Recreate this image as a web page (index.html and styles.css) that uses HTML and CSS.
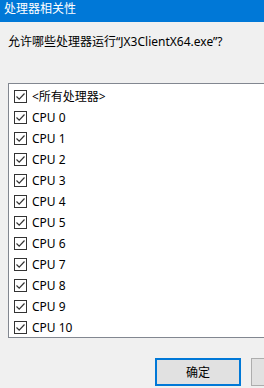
FILE: index.html
```html
<!DOCTYPE html>
<html>
<head>
<meta charset="utf-8">
<link rel="stylesheet" href="styles.css">
</head>
<body>
<div class="dialog">
  <div class="titlebar">处理器相关性</div>
  <div class="prompt">允许哪些处理器运行“JX3ClientX64.exe”?</div>
  <div class="listbox">
    <div class="row"><span class="cb"><svg width="11" height="11" viewBox="0 0 11 11"><path d="M1.5 5.5 L4.2 8.2 L9.5 2.5" fill="none" stroke="#333" stroke-width="1.2"/></svg></span><span class="lbl">&lt;所有处理器&gt;</span></div>
    <div class="row"><span class="cb"><svg width="11" height="11" viewBox="0 0 11 11"><path d="M1.5 5.5 L4.2 8.2 L9.5 2.5" fill="none" stroke="#333" stroke-width="1.2"/></svg></span><span class="lbl">CPU 0</span></div>
    <div class="row"><span class="cb"><svg width="11" height="11" viewBox="0 0 11 11"><path d="M1.5 5.5 L4.2 8.2 L9.5 2.5" fill="none" stroke="#333" stroke-width="1.2"/></svg></span><span class="lbl">CPU 1</span></div>
    <div class="row"><span class="cb"><svg width="11" height="11" viewBox="0 0 11 11"><path d="M1.5 5.5 L4.2 8.2 L9.5 2.5" fill="none" stroke="#333" stroke-width="1.2"/></svg></span><span class="lbl">CPU 2</span></div>
    <div class="row"><span class="cb"><svg width="11" height="11" viewBox="0 0 11 11"><path d="M1.5 5.5 L4.2 8.2 L9.5 2.5" fill="none" stroke="#333" stroke-width="1.2"/></svg></span><span class="lbl">CPU 3</span></div>
    <div class="row"><span class="cb"><svg width="11" height="11" viewBox="0 0 11 11"><path d="M1.5 5.5 L4.2 8.2 L9.5 2.5" fill="none" stroke="#333" stroke-width="1.2"/></svg></span><span class="lbl">CPU 4</span></div>
    <div class="row"><span class="cb"><svg width="11" height="11" viewBox="0 0 11 11"><path d="M1.5 5.5 L4.2 8.2 L9.5 2.5" fill="none" stroke="#333" stroke-width="1.2"/></svg></span><span class="lbl">CPU 5</span></div>
    <div class="row"><span class="cb"><svg width="11" height="11" viewBox="0 0 11 11"><path d="M1.5 5.5 L4.2 8.2 L9.5 2.5" fill="none" stroke="#333" stroke-width="1.2"/></svg></span><span class="lbl">CPU 6</span></div>
    <div class="row"><span class="cb"><svg width="11" height="11" viewBox="0 0 11 11"><path d="M1.5 5.5 L4.2 8.2 L9.5 2.5" fill="none" stroke="#333" stroke-width="1.2"/></svg></span><span class="lbl">CPU 7</span></div>
    <div class="row"><span class="cb"><svg width="11" height="11" viewBox="0 0 11 11"><path d="M1.5 5.5 L4.2 8.2 L9.5 2.5" fill="none" stroke="#333" stroke-width="1.2"/></svg></span><span class="lbl">CPU 8</span></div>
    <div class="row"><span class="cb"><svg width="11" height="11" viewBox="0 0 11 11"><path d="M1.5 5.5 L4.2 8.2 L9.5 2.5" fill="none" stroke="#333" stroke-width="1.2"/></svg></span><span class="lbl">CPU 9</span></div>
    <div class="row"><span class="cb"><svg width="11" height="11" viewBox="0 0 11 11"><path d="M1.5 5.5 L4.2 8.2 L9.5 2.5" fill="none" stroke="#333" stroke-width="1.2"/></svg></span><span class="lbl">CPU 10</span></div>
  </div>
  <div class="buttons">
    <button class="btn primary">确定</button>
    <button class="btn" aria-label="取消"></button>
  </div>
</div>
</body>
</html>
```

FILE: styles.css
```css
html, body {
  margin: 0;
  padding: 0;
  background: #f0f0f0;
  overflow: hidden;
}
body {
  width: 264px;
  height: 388px;
  font-family: "Noto Sans", "Noto Sans CJK SC", sans-serif;
  font-size: 12px;
  color: #000;
}
.dialog {
  display: flex;
  flex-direction: column;
  width: 264px;
}
.titlebar {
  height: 22px;
  background: #0078d7;
  color: #fff;
  line-height: 18px;
  padding-left: 4px;
  font-size: 12px;
}
.prompt {
  margin-top: 12px;
  padding-left: 8px;
  line-height: 16px;
  white-space: nowrap;
}
.listbox {
  margin-top: 33px;
  margin-left: 8px;
  width: 290px;
  height: 251px;
  background: #fff;
  border: 1px solid #828790;
  padding-top: 2px;
  box-sizing: content-box;
  flex-shrink: 0;
}
.row {
  display: flex;
  align-items: center;
  height: 21px;
  padding-left: 5px;
}
.cb {
  width: 11px;
  height: 11px;
  border: 1px solid #333;
  background: #fff;
  display: flex;
  align-items: center;
  justify-content: center;
  margin-right: 5px;
  flex-shrink: 0;
}
.cb svg { display: block; }
.lbl {
  line-height: 16px;
  white-space: nowrap;
}
.buttons {
  display: flex;
  gap: 10px;
  margin-top: 20px;
  padding-left: 155px;
}
.btn {
  flex-shrink: 0;
  width: 86px;
  height: 28px;
  background: #e1e1e1;
  border: 1px solid #adadad;
  font-family: "Noto Sans", "Noto Sans CJK SC", sans-serif;
  font-size: 12px;
  color: #000;
  padding: 0;
  margin: 0;
}
.btn.primary {
  border: 2px solid #0078d7;
}
```
